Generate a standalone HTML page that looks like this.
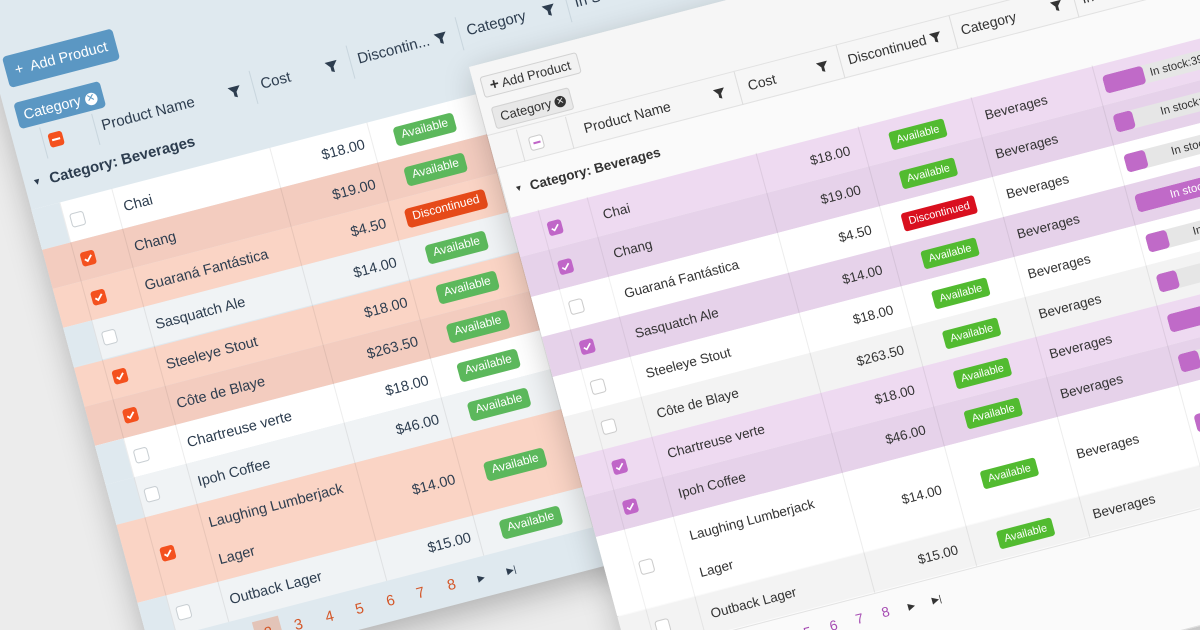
<!DOCTYPE html>
<html><head><meta charset="utf-8"><style>
*{margin:0;padding:0;box-sizing:border-box}
html{width:1200px;height:630px;overflow:hidden}
body{width:1200px;height:630px;overflow:hidden;background:#ececec;font-family:"Liberation Sans",Arial,sans-serif;position:relative}
#wrap{position:absolute;left:0;top:0;width:1200px;height:630px;overflow:hidden}
.g{position:absolute;left:0;top:0;width:0;height:0;transform-origin:0 0}
.a{position:absolute;white-space:nowrap}
.row{position:absolute;left:4px;width:900px}
.row>*{position:absolute}
.L{color:#2d3d4f;font-size:14px}
.L .ind{left:0;width:28px;top:0;bottom:0;background:#dfe9ef}
.L .cb{left:34px;width:14px;height:14px;border-radius:3px;background:#fff;border:1px solid #c9cfd3}
.L .cb.on{background:#f4511e;border-color:#f4511e}
.L .nm{left:87px;white-space:nowrap}
.L .cs{left:238px;width:90px;text-align:right}
.L .bw{left:335px;width:106px;text-align:center}
.L .bd{display:inline-block;background:#5cb85c;color:#fff;font-size:11.5px;padding:3px 7px;border-radius:4px;line-height:13px}
.L .bd.d{background:#e64a19}
.L .cat{left:452px}
.vl{position:absolute;width:1px}
.R{color:#333;font-size:13px}
.R .cb{left:33px;width:14px;height:14px;border-radius:3px;background:#fff;border:1px solid #ccc}
.R .cb.on{background:#c066c8;border-color:#c066c8}
.R .nm{left:88px;white-space:nowrap}
.R .cs{left:242px;width:93px;text-align:right}
.R .bw{left:344px;width:117px;text-align:center}
.R .bd{display:inline-block;background:#52bb30;color:#fff;font-size:10.5px;padding:3px 6px;border-radius:3px;line-height:12px}
.R .bd.d{background:#d9101f}
.R .cat{left:470px}
.R .sb{left:589px;width:150px;height:18px;background:#e6e6e6;border-radius:4px;overflow:hidden}
.R .sb i{position:absolute;left:0;top:0;bottom:0;background:#c06ac8;border-radius:4px}
.R .sb span{position:absolute;left:46px;top:0;line-height:18px;font-size:11px;color:#333;white-space:nowrap}
svg{display:block}
</style></head><body><div id="wrap">

<div class="g L" style="transform:matrix(1,-0.26,0.27,1,-17.2,45.9)">
  <div class="a" style="left:4px;top:-140px;width:900px;height:777px;background:#dfe9ef;box-shadow:0 10px 30px rgba(0,0,0,.25)"></div>
  <div class="a" style="left:15px;top:15px;width:110px;height:31px;background:#5b97c3;border-radius:4px;color:#fff;font-size:14px;line-height:31px;padding-left:9px">+&nbsp; Add Product</div>
  <div class="a" style="left:14px;top:61px;width:86px;height:26px;background:#5b97c3;border-radius:4px;color:#fff;font-size:14px;line-height:26px;padding-left:7px">Category <span style="font-size:10px;display:inline-block;width:12px;height:12px;border-radius:6px;background:#fff;color:#5b97c3;line-height:12px;text-align:center;vertical-align:1px">✕</span></div>
  <div class="a" style="left:38px;top:98px;width:14px;height:14px;background:#f4511e;border-radius:3px"><div style="position:absolute;left:3px;top:6px;width:8px;height:2px;background:#fff"></div></div>
  <div class="a" style="left:91px;top:96px;font-size:14.5px">Product Name</div>
  <svg class="a" style="left:218px;top:98px" width="12" height="13" viewBox="0 0 12 13"><path d="M0 1h12L7.5 6.5V12L4.5 10.5V6.5z" fill="#2d3d4f"/></svg>
  <div class="a" style="left:250px;top:96px;font-size:14.5px">Cost</div>
  <svg class="a" style="left:315px;top:98px" width="12" height="13" viewBox="0 0 12 13"><path d="M0 1h12L7.5 6.5V12L4.5 10.5V6.5z" fill="#2d3d4f"/></svg>
  <div class="a" style="left:347px;top:96px;font-size:14.5px">Discontin...</div>
  <svg class="a" style="left:424px;top:98px" width="12" height="13" viewBox="0 0 12 13"><path d="M0 1h12L7.5 6.5V12L4.5 10.5V6.5z" fill="#2d3d4f"/></svg>
  <div class="a" style="left:456px;top:96px;font-size:14.5px">Category</div>
  <svg class="a" style="left:532px;top:98px" width="12" height="13" viewBox="0 0 12 13"><path d="M0 1h12L7.5 6.5V12L4.5 10.5V6.5z" fill="#2d3d4f"/></svg>
  <div class="a" style="left:564px;top:96px;font-size:14.5px">In Stock</div>
  <div class="vl" style="left:32px;top:90px;height:31px;background:#c9d6de"></div>
  <div class="vl" style="left:84px;top:90px;height:31px;background:#c9d6de"></div>
  <div class="vl" style="left:242px;top:88px;height:33px;background:#c9d6de"></div>
  <div class="vl" style="left:339px;top:88px;height:33px;background:#c9d6de"></div>
  <div class="vl" style="left:448px;top:88px;height:33px;background:#c9d6de"></div>
  <div class="vl" style="left:556px;top:88px;height:33px;background:#c9d6de"></div>
  <div class="a" style="left:12px;top:133px;font-size:14.5px;font-weight:bold"><span style="font-size:9px;vertical-align:2px">▼</span>&nbsp; Category: Beverages</div>

  <div class="row" style="top:165.3px;height:39.3px;background:#fff"><i class="ind"></i><i class="cb" style="top:12.6px"></i><div class="nm" style="line-height:39.3px">Chai</div><div class="cs" style="line-height:39.3px">$18.00</div><div class="bw" style="top:10px"><span class="bd">Available</span></div><div class="cat" style="line-height:39.3px">Beverages</div></div>
  <div class="row" style="top:204.6px;height:39.3px;background:#f3ccbf"><i class="cb on" style="top:12.6px"><svg width="12" height="12" viewBox="0 0 12 12"><path d="M2.5 6.2l2.3 2.3 4.7-5" stroke="#fff" stroke-width="1.8" fill="none"/></svg></i><div class="nm" style="line-height:39.3px">Chang</div><div class="cs" style="line-height:39.3px">$19.00</div><div class="bw" style="top:10px"><span class="bd">Available</span></div><div class="cat" style="line-height:39.3px">Beverages</div></div>
  <div class="row" style="top:243.9px;height:39.3px;background:#fad4c5"><i class="cb on" style="top:12.6px"><svg width="12" height="12" viewBox="0 0 12 12"><path d="M2.5 6.2l2.3 2.3 4.7-5" stroke="#fff" stroke-width="1.8" fill="none"/></svg></i><div class="nm" style="line-height:39.3px">Guaraná Fantástica</div><div class="cs" style="line-height:39.3px">$4.50</div><div class="bw" style="top:10px"><span class="bd d">Discontinued</span></div><div class="cat" style="line-height:39.3px">Beverages</div></div>
  <div class="row" style="top:283.2px;height:39.3px;background:#f0f3f5"><i class="ind"></i><i class="cb" style="top:12.6px"></i><div class="nm" style="line-height:39.3px">Sasquatch Ale</div><div class="cs" style="line-height:39.3px">$14.00</div><div class="bw" style="top:10px"><span class="bd">Available</span></div><div class="cat" style="line-height:39.3px">Beverages</div></div>
  <div class="row" style="top:322.5px;height:39.3px;background:#fad4c5"><i class="cb on" style="top:12.6px"><svg width="12" height="12" viewBox="0 0 12 12"><path d="M2.5 6.2l2.3 2.3 4.7-5" stroke="#fff" stroke-width="1.8" fill="none"/></svg></i><div class="nm" style="line-height:39.3px">Steeleye Stout</div><div class="cs" style="line-height:39.3px">$18.00</div><div class="bw" style="top:10px"><span class="bd">Available</span></div><div class="cat" style="line-height:39.3px">Beverages</div></div>
  <div class="row" style="top:361.8px;height:39.3px;background:#f3ccbf"><i class="cb on" style="top:12.6px"><svg width="12" height="12" viewBox="0 0 12 12"><path d="M2.5 6.2l2.3 2.3 4.7-5" stroke="#fff" stroke-width="1.8" fill="none"/></svg></i><div class="nm" style="line-height:39.3px">Côte de Blaye</div><div class="cs" style="line-height:39.3px">$263.50</div><div class="bw" style="top:10px"><span class="bd">Available</span></div><div class="cat" style="line-height:39.3px">Beverages</div></div>
  <div class="row" style="top:401.1px;height:39.3px;background:#fff"><i class="ind"></i><i class="cb" style="top:12.6px"></i><div class="nm" style="line-height:39.3px">Chartreuse verte</div><div class="cs" style="line-height:39.3px">$18.00</div><div class="bw" style="top:10px"><span class="bd">Available</span></div><div class="cat" style="line-height:39.3px">Beverages</div></div>
  <div class="row" style="top:440.4px;height:39.3px;background:#f0f3f5"><i class="ind"></i><i class="cb" style="top:12.6px"></i><div class="nm" style="line-height:39.3px">Ipoh Coffee</div><div class="cs" style="line-height:39.3px">$46.00</div><div class="bw" style="top:10px"><span class="bd">Available</span></div><div class="cat" style="line-height:39.3px">Beverages</div></div>
  <div class="row" style="top:479.7px;height:78.6px;background:#fad4c5"><i class="cb on" style="top:32.3px"><svg width="12" height="12" viewBox="0 0 12 12"><path d="M2.5 6.2l2.3 2.3 4.7-5" stroke="#fff" stroke-width="1.8" fill="none"/></svg></i><div class="nm" style="top:2px;line-height:37px">Laughing Lumberjack<br>Lager</div><div class="cs" style="line-height:78.6px">$14.00</div><div class="bw" style="top:30px"><span class="bd">Available</span></div><div class="cat" style="line-height:78.6px">Beverages</div></div>
  <div class="row" style="top:558.3px;height:39.3px;background:#f0f3f5"><i class="ind"></i><i class="cb" style="top:12.6px"></i><div class="nm" style="line-height:39.3px">Outback Lager</div><div class="cs" style="line-height:39.3px">$15.00</div><div class="bw" style="top:10px"><span class="bd">Available</span></div><div class="cat" style="line-height:39.3px">Beverages</div></div>

  <div class="vl" style="left:32px;top:165px;height:433px;background:rgba(0,0,0,.07)"></div>
  <div class="vl" style="left:84px;top:165px;height:433px;background:rgba(0,0,0,.07)"></div>
  <div class="vl" style="left:242px;top:165px;height:433px;background:rgba(0,0,0,.07)"></div>
  <div class="vl" style="left:339px;top:165px;height:433px;background:rgba(0,0,0,.07)"></div>
  <div class="vl" style="left:448px;top:165px;height:433px;background:rgba(0,0,0,.07)"></div>
  <div class="vl" style="left:556px;top:165px;height:433px;background:rgba(0,0,0,.07)"></div>
  <div class="a" style="left:0;top:607px;width:600px;height:22px;color:#d4582a;font-size:14.5px;line-height:22px">
    <span class="a" style="left:83px">1</span>
    <span class="a" style="left:106px;top:-3px;width:26px;height:28px;background:#e3c4b8"></span>
    <span class="a" style="left:115px">2</span>
    <span class="a" style="left:145px">3</span>
    <span class="a" style="left:176px">4</span>
    <span class="a" style="left:206px">5</span>
    <span class="a" style="left:237px">6</span>
    <span class="a" style="left:267px">7</span>
    <span class="a" style="left:298px">8</span>
    <span class="a" style="left:328px;color:#2d3d4f;font-size:9px">▶</span>
    <span class="a" style="left:357px;color:#2d3d4f;font-size:9px">▶|</span>
  </div>
</div>

<div class="g R" style="transform:matrix(1,-0.26,0.27,1,469,67)">
  <div class="a" style="left:0;top:0;width:900px;height:700px;background:#fafafa;border:1px solid #ddd;box-shadow:0 8px 30px rgba(0,0,0,.22)"></div>
  <div class="a" style="left:0;top:0;width:900px;height:102px;background:#f6f6f6;border-bottom:1px solid #e2e2e2"></div>
  <div class="a" style="left:7px;top:12px;width:97px;height:21px;background:#f2f2f2;border:1px solid #d2d2d2;border-radius:3px;font-size:12.5px;line-height:19px;padding-left:7px"><b style="font-size:15px">+</b> Add Product</div>
  <div class="a" style="left:10px;top:43px;width:78px;height:22px;background:#e8e8e8;border:1px solid #d2d2d2;border-radius:3px;font-size:12.5px;line-height:20px;padding-left:6px">Category <span style="font-size:9px;display:inline-block;width:11px;height:11px;border-radius:6px;background:#333;color:#e8e8e8;line-height:11px;text-align:center;vertical-align:1px">✕</span></div>
  <div class="a" style="left:37px;top:80px;width:14px;height:14px;background:#fff;border:1px solid #ccc;border-radius:3px"><div style="position:absolute;left:3px;top:5px;width:7px;height:2px;background:#c066c8"></div></div>
  <div class="a" style="left:92px;top:78px;font-size:13.5px">Product Name</div>
  <svg class="a" style="left:222px;top:80px" width="11" height="12" viewBox="0 0 12 13"><path d="M0 1h12L7.5 6.5V12L4.5 10.5V6.5z" fill="#333"/></svg>
  <div class="a" style="left:256px;top:78px;font-size:13.5px">Cost</div>
  <svg class="a" style="left:325px;top:80px" width="11" height="12" viewBox="0 0 12 13"><path d="M0 1h12L7.5 6.5V12L4.5 10.5V6.5z" fill="#333"/></svg>
  <div class="a" style="left:356px;top:78px;font-size:13.5px">Discontinued</div>
  <svg class="a" style="left:438px;top:80px" width="11" height="12" viewBox="0 0 12 13"><path d="M0 1h12L7.5 6.5V12L4.5 10.5V6.5z" fill="#333"/></svg>
  <div class="a" style="left:469px;top:78px;font-size:13.5px">Category</div>
  <svg class="a" style="left:559px;top:80px" width="11" height="12" viewBox="0 0 12 13"><path d="M0 1h12L7.5 6.5V12L4.5 10.5V6.5z" fill="#333"/></svg>
  <div class="a" style="left:590px;top:78px;font-size:13.5px">In stock</div>
  <div class="vl" style="left:28px;top:70px;height:32px;background:#ddd"></div>
  <div class="vl" style="left:77px;top:70px;height:32px;background:#ddd"></div>
  <div class="vl" style="left:246px;top:68px;height:34px;background:#ddd"></div>
  <div class="vl" style="left:348px;top:68px;height:34px;background:#ddd"></div>
  <div class="vl" style="left:461px;top:68px;height:34px;background:#ddd"></div>
  <div class="vl" style="left:582px;top:68px;height:34px;background:#ddd"></div>
  <div class="a" style="left:0;top:68px;width:900px;height:1px;background:#e2e2e2"></div>
  <div class="a" style="left:12px;top:118px;font-size:13px;font-weight:bold"><span style="font-size:8px;vertical-align:2px">▼</span>&nbsp; Category: Beverages</div>

  <div class="row" style="left:0;top:150.5px;height:39.9px;background:#eedaf1"><i class="cb on" style="top:13px"><svg width="12" height="12" viewBox="0 0 12 12"><path d="M2.5 6.2l2.3 2.3 4.7-5" stroke="#fff" stroke-width="1.6" fill="none"/></svg></i><div class="nm" style="line-height:39.9px">Chai</div><div class="cs" style="line-height:39.9px">$18.00</div><div class="bw" style="top:12px"><span class="bd">Available</span></div><div class="cat" style="line-height:39.9px">Beverages</div><div class="sb" style="top:11px"><i style="width:40px"></i><span>In stock:39</span></div></div>
  <div class="row" style="left:0;top:190.4px;height:39.9px;background:#e6d2ea"><i class="cb on" style="top:13px"><svg width="12" height="12" viewBox="0 0 12 12"><path d="M2.5 6.2l2.3 2.3 4.7-5" stroke="#fff" stroke-width="1.6" fill="none"/></svg></i><div class="nm" style="line-height:39.9px">Chang</div><div class="cs" style="line-height:39.9px">$19.00</div><div class="bw" style="top:12px"><span class="bd">Available</span></div><div class="cat" style="line-height:39.9px">Beverages</div><div class="sb" style="top:11px"><i style="width:19px"></i><span>In stock:17</span></div></div>
  <div class="row" style="left:0;top:230.3px;height:39.9px;background:#fff"><i class="cb" style="top:13px"></i><div class="nm" style="line-height:39.9px">Guaraná Fantástica</div><div class="cs" style="line-height:39.9px">$4.50</div><div class="bw" style="top:12px"><span class="bd d">Discontinued</span></div><div class="cat" style="line-height:39.9px">Beverages</div><div class="sb" style="top:11px"><i style="width:21px"></i><span>In stock:13</span></div></div>
  <div class="row" style="left:0;top:270.2px;height:39.9px;background:#e6d2ea"><i class="cb on" style="top:13px"><svg width="12" height="12" viewBox="0 0 12 12"><path d="M2.5 6.2l2.3 2.3 4.7-5" stroke="#fff" stroke-width="1.6" fill="none"/></svg></i><div class="nm" style="line-height:39.9px">Sasquatch Ale</div><div class="cs" style="line-height:39.9px">$14.00</div><div class="bw" style="top:12px"><span class="bd">Available</span></div><div class="cat" style="line-height:39.9px">Beverages</div><div class="sb" style="top:11px"><i style="width:150px"></i><span style="left:34px;color:#fff">In stock:111</span></div></div>
  <div class="row" style="left:0;top:310.1px;height:39.9px;background:#fff"><i class="cb" style="top:13px"></i><div class="nm" style="line-height:39.9px">Steeleye Stout</div><div class="cs" style="line-height:39.9px">$18.00</div><div class="bw" style="top:12px"><span class="bd">Available</span></div><div class="cat" style="line-height:39.9px">Beverages</div><div class="sb" style="top:11px"><i style="width:21px"></i><span>In stock:20</span></div></div>
  <div class="row" style="left:0;top:350px;height:39.9px;background:#f3f3f3"><i class="cb" style="top:13px"></i><div class="nm" style="line-height:39.9px">Côte de Blaye</div><div class="cs" style="line-height:39.9px">$263.50</div><div class="bw" style="top:12px"><span class="bd">Available</span></div><div class="cat" style="line-height:39.9px">Beverages</div><div class="sb" style="top:11px"><i style="width:20px"></i><span>In stock:17</span></div></div>
  <div class="row" style="left:0;top:389.9px;height:39.9px;background:#eedaf1"><i class="cb on" style="top:13px"><svg width="12" height="12" viewBox="0 0 12 12"><path d="M2.5 6.2l2.3 2.3 4.7-5" stroke="#fff" stroke-width="1.6" fill="none"/></svg></i><div class="nm" style="line-height:39.9px">Chartreuse verte</div><div class="cs" style="line-height:39.9px">$18.00</div><div class="bw" style="top:12px"><span class="bd">Available</span></div><div class="cat" style="line-height:39.9px">Beverages</div><div class="sb" style="top:11px"><i style="width:60px"></i><span>In stock:69</span></div></div>
  <div class="row" style="left:0;top:429.8px;height:39.9px;background:#e6d2ea"><i class="cb on" style="top:13px"><svg width="12" height="12" viewBox="0 0 12 12"><path d="M2.5 6.2l2.3 2.3 4.7-5" stroke="#fff" stroke-width="1.6" fill="none"/></svg></i><div class="nm" style="line-height:39.9px">Ipoh Coffee</div><div class="cs" style="line-height:39.9px">$46.00</div><div class="bw" style="top:12px"><span class="bd">Available</span></div><div class="cat" style="line-height:39.9px">Beverages</div><div class="sb" style="top:11px"><i style="width:20px"></i><span>In stock:17</span></div></div>
  <div class="row" style="left:0;top:469.7px;height:79.8px;background:#fff"><i class="cb" style="top:33px"></i><div class="nm" style="top:3px;line-height:37px">Laughing Lumberjack<br>Lager</div><div class="cs" style="line-height:79.8px">$14.00</div><div class="bw" style="top:32px"><span class="bd">Available</span></div><div class="cat" style="line-height:79.8px">Beverages</div><div class="sb" style="top:31px"><i style="width:45px"></i><span>In stock:52</span></div></div>
  <div class="row" style="left:0;top:549.5px;height:39.9px;background:#f3f3f3"><i class="cb" style="top:13px"></i><div class="nm" style="line-height:39.9px">Outback Lager</div><div class="cs" style="line-height:39.9px">$15.00</div><div class="bw" style="top:12px"><span class="bd">Available</span></div><div class="cat" style="line-height:39.9px">Beverages</div><div class="sb" style="top:11px"><i style="width:18px"></i><span>In stock:15</span></div></div>

  <div class="vl" style="left:28px;top:150px;height:440px;background:rgba(0,0,0,.06)"></div>
  <div class="vl" style="left:77px;top:150px;height:440px;background:rgba(0,0,0,.06)"></div>
  <div class="vl" style="left:246px;top:150px;height:440px;background:rgba(0,0,0,.07)"></div>
  <div class="vl" style="left:348px;top:150px;height:440px;background:rgba(0,0,0,.07)"></div>
  <div class="vl" style="left:461px;top:150px;height:440px;background:rgba(0,0,0,.07)"></div>
  <div class="vl" style="left:582px;top:150px;height:440px;background:rgba(0,0,0,.07)"></div>
  <div class="a" style="left:0;top:589.5px;width:900px;height:1px;background:#e2e2e2"></div>
  <div class="a" style="left:0;top:600px;width:600px;height:22px;color:#a64db3;font-size:13.5px;line-height:22px">
    <span class="a" style="left:61px;top:-3px;width:24px;height:28px;background:#e8d0ec"></span>
    <span class="a" style="left:66px;color:#333">1</span>
    <span class="a" style="left:92px">2</span>
    <span class="a" style="left:118px">3</span>
    <span class="a" style="left:144px">4</span>
    <span class="a" style="left:170px">5</span>
    <span class="a" style="left:196px">6</span>
    <span class="a" style="left:222px">7</span>
    <span class="a" style="left:248px">8</span>
    <span class="a" style="left:274px;color:#333;font-size:9px">▶</span>
    <span class="a" style="left:298px;color:#333;font-size:9px">▶|</span>
  </div>
</div>
</div></body></html>
